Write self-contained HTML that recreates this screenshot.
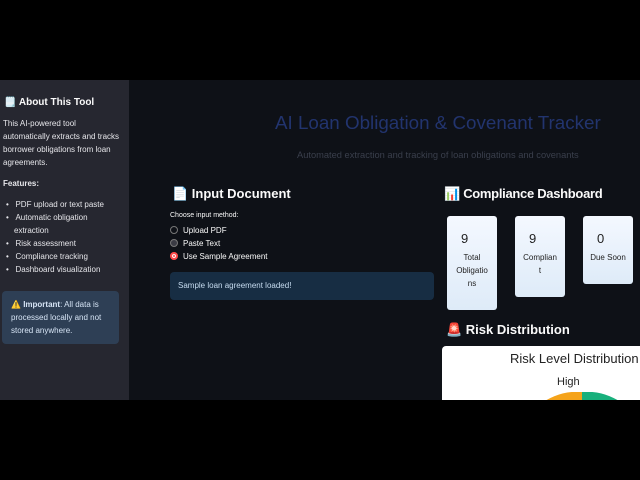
<!DOCTYPE html>
<html><head><meta charset="utf-8"><style>
*{margin:0;padding:0;box-sizing:border-box}
body{width:640px;height:480px;background:#000;font-family:"Liberation Sans","DejaVu Sans",sans-serif;overflow:hidden;position:relative}
#app{position:absolute;top:80px;left:0;width:640px;height:320px;background:#0e1117;overflow:hidden}
#side{position:absolute;left:0;top:0;width:129px;height:320px;background:#262730;color:#e6e6ea;font-size:8px;line-height:13px;padding:0 0 0 4px}
.abs{position:absolute}
#main{color:#fafafa}
.card{position:absolute;background:linear-gradient(#f4f8ff,#deebf8);border-radius:3px;color:#222;text-align:center;font-size:8px;line-height:13px}
.card b{display:block;font-size:13px;font-weight:normal;text-align:left;padding-left:14px;margin:16px 0 6px}
.radio{position:absolute;left:170px;font-size:8px;color:#fafafa}
.radio i{display:inline-block;width:8px;height:8px;border-radius:50%;border:1px solid #777;vertical-align:-1px;margin-right:5px}
</style></head><body>
<div id="app">
<div id="side">
 <div class="abs" style="top:16px;left:4px;font-size:10px;font-weight:bold;color:#fafafa">🗒️ About This Tool</div>
 <div class="abs" style="top:37px;left:3px;width:120px">This AI-powered tool automatically extracts and tracks borrower obligations from loan agreements.</div>
 <div class="abs" style="top:97px;left:3px;font-weight:bold">Features:</div>
 <div class="abs" style="top:118px;left:6px;width:118px">
  <div>•&nbsp;&nbsp;&nbsp;PDF upload or text paste</div>
  <div style="padding-left:8px;text-indent:-8px">•&nbsp;&nbsp;&nbsp;Automatic obligation<br>extraction</div>
  <div>•&nbsp;&nbsp;&nbsp;Risk assessment</div>
  <div>•&nbsp;&nbsp;&nbsp;Compliance tracking</div>
  <div>•&nbsp;&nbsp;&nbsp;Dashboard visualization</div>
 </div>
 <div class="abs" style="top:211px;left:2px;width:117px;height:53px;background:#2e3f55;border-radius:4px;padding:7px 9px;color:#d6e4f5">⚠️ <b>Important</b>: All data is processed locally and not stored anywhere.</div>
</div>
<div id="main">
 <div class="abs" style="top:32px;left:275px;font-size:18.8px;color:#22346e;white-space:nowrap">AI Loan Obligation &amp; Covenant Tracker</div>
 <div class="abs" style="top:70px;left:297px;font-size:9.3px;color:#3a3f4c;white-space:nowrap">Automated extraction and tracking of loan obligations and covenants</div>
 <div class="abs" style="top:106px;left:172px;font-size:13px;font-weight:bold">📄 Input Document</div>
 <div class="abs" style="top:132px;left:170px;font-size:7px">Choose input method:</div>
 <div class="radio" style="top:146px"><i></i>Upload PDF</div>
 <div class="radio" style="top:159px"><i style="background:#3a3b44"></i>Paste Text</div>
 <div class="radio" style="top:172px"><i style="background:#ff4b4b;border:2.5px solid #ff4b4b;box-shadow:inset 0 0 0 1px #fff"></i>Use Sample Agreement</div>
 <div class="abs" style="top:192px;left:170px;width:264px;height:28px;background:#172d43;border-radius:4px;font-size:8px;color:#c7dcf0;padding:9px 8px">Sample loan agreement loaded!</div>
 <div class="abs" style="top:106px;left:444px;font-size:13px;font-weight:bold;white-space:nowrap;letter-spacing:-0.3px">📊 Compliance Dashboard</div>
 <div class="card" style="left:447px;top:136px;width:50px;height:94px"><b>9</b>Total<br>Obligatio<br>ns</div>
 <div class="card" style="left:515px;top:136px;width:50px;height:81px"><b>9</b>Complian<br>t</div>
 <div class="card" style="left:583px;top:136px;width:50px;height:68px"><b>0</b>Due Soon</div>
 <div class="abs" style="top:242px;left:446px;font-size:13px;font-weight:bold;white-space:nowrap">🚨 Risk Distribution</div>
 <div class="abs" style="top:266px;left:442px;width:210px;height:60px;background:#fff;border-radius:4px;color:#222">
  <div class="abs" style="top:5px;left:68px;font-size:13px;white-space:nowrap">Risk Level Distribution</div>
  <div class="abs" style="top:30px;left:115px;font-size:11px">High</div>
  <svg class="abs" style="left:90px;top:46px" width="90" height="20"><path d="M50 0 A60 60 0 0 0 0 20 L50 60Z" fill="#f5a31a"/><path d="M50 0 A60 60 0 0 1 100 20 L50 60Z" fill="#18b07c"/></svg>
 </div>
</div>
</div>
</body></html>
